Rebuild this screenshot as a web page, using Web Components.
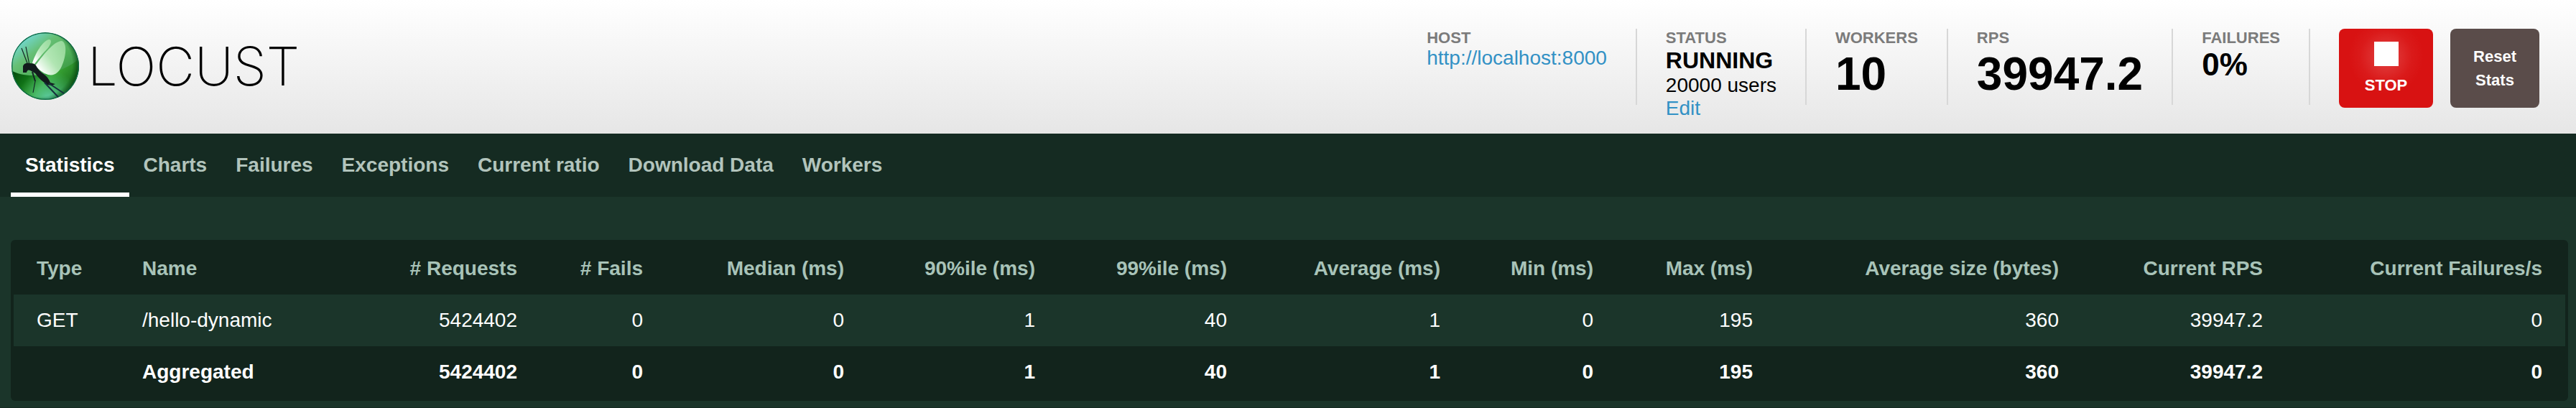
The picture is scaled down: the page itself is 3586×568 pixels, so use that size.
<!DOCTYPE html>
<html lang="en">
<head>
<meta charset="utf-8">
<title>Locust</title>
<style>
  html, body { margin: 0; }
  body { background: #1b352a; font-family: "Liberation Sans", Arial, sans-serif; font-size: 28px; color: #fff; }
</style>
</head>
<body>
<locust-app></locust-app>

<template id="t-app">
  <style>
    :host { display: block; }
    header { display: flex; align-items: flex-start; justify-content: space-between; height: 186px; box-sizing: border-box; padding: 40px 51px 0 16px; background: linear-gradient(#fff, #e6e6e6); color: #000; }
    .boxes { display: flex; align-items: flex-start; }
    .buttons { display: flex; gap: 24px; padding-left: 40px; }
    nav { display: flex; height: 88px; padding: 0 15px; background: #152b22; }
    main { display: block; padding: 60px 11px 9px 15px; }
    footer { height: 8px; background: #152b22; }
    a { color: #3291c5; text-decoration: none; }
    .running { font: bold 32px/38px "Liberation Sans", Arial, sans-serif; display: block; }
  </style>
  <header>
    <locust-logo></locust-logo>
    <div class="boxes">
      <stat-box label="Host"><a href="#host">http://localhost:8000</a></stat-box>
      <stat-box label="Status"><span class="running">RUNNING</span>20000 users<br><a href="#edit">Edit</a></stat-box>
      <stat-box label="Workers" size="large">10</stat-box>
      <stat-box label="RPS" size="large">39947.2</stat-box>
      <stat-box label="Failures" size="medium">0%</stat-box>
      <div class="buttons">
        <action-button kind="stop">STOP</action-button>
        <action-button kind="reset">Reset<br>Stats</action-button>
      </div>
    </div>
  </header>
  <nav>
    <nav-tab active>Statistics</nav-tab>
    <nav-tab>Charts</nav-tab>
    <nav-tab>Failures</nav-tab>
    <nav-tab>Exceptions</nav-tab>
    <nav-tab>Current ratio</nav-tab>
    <nav-tab>Download Data</nav-tab>
    <nav-tab>Workers</nav-tab>
  </nav>
  <main><stats-table></stats-table></main>
  <footer></footer>
</template>

<template id="t-logo">
  <style>
    :host { display: flex; align-items: center; gap: 12px; height: 104px; }
    svg { display: block; width: 94px; height: 94px; }
    span { font: 200 74px/94px Inter, sans-serif; color: #000; }
  </style>
  <svg viewBox="0 0 94 94" aria-hidden="true">
    <defs>
      <linearGradient id="base" x1="0.1" y1="0.1" x2="0.7" y2="0.9">
        <stop offset="0" stop-color="#74dbe0"/><stop offset="0.3" stop-color="#66bf74"/>
        <stop offset="0.6" stop-color="#4fae58"/><stop offset="1" stop-color="#2d8a38"/>
      </linearGradient>
      <linearGradient id="shade" x1="0" y1="0.3" x2="0.8" y2="0.7">
        <stop offset="0" stop-color="#02470a"/><stop offset="0.3" stop-color="#0f7016"/>
        <stop offset="0.65" stop-color="#3ba736"/><stop offset="1" stop-color="#1f7a22"/>
      </linearGradient>
      <radialGradient id="glow" cx="0.55" cy="1" r="0.45">
        <stop offset="0" stop-color="#66d6b4" stop-opacity="0.95"/><stop offset="1" stop-color="#4cc07a" stop-opacity="0"/>
      </radialGradient>
      <radialGradient id="rim" cx="0.42" cy="0.47" r="0.6">
        <stop offset="0.8" stop-color="#064d14" stop-opacity="0"/><stop offset="1" stop-color="#04330c" stop-opacity="0.85"/>
      </radialGradient>
      <linearGradient id="wing" x1="1" y1="0" x2="0.1" y2="0.8">
        <stop offset="0" stop-color="#b8ecb8" stop-opacity="0.6"/><stop offset="0.6" stop-color="#c9f3c9" stop-opacity="0.8"/><stop offset="1" stop-color="#fff"/>
      </linearGradient>
      <clipPath id="globe"><circle cx="47" cy="47" r="47"/></clipPath>
    </defs>
    <g clip-path="url(#globe)">
      <circle cx="47" cy="47" r="47" fill="url(#base)"/>
      <path d="M0 53C20 66 66 61 94 37V94H0Z" fill="url(#shade)"/>
      <circle cx="47" cy="47" r="47" fill="url(#glow)"/>
      <circle cx="47" cy="47" r="47" fill="url(#rim)"/>
      <circle cx="47" cy="47" r="46.300" fill="none" stroke="#0f6a48" stroke-width="1.400"/>
      <path d="M29 43C33 30 43 12 52 10C58 10 54 19 48 25C42 31 36 39 32 44Z" fill="url(#wing)"/>
      <path d="M35 44C44 32 59 12 70 12C78 15 76 34 70 47C66 56 60 61 51 59C44 57 38 52 33 46Z" fill="url(#wing)"/>
      <path d="M16 56V47Q18 42 25 43Q32 43 34 46Q37 53 46 59Q52 64 54 70L61 72L56 74L50 73Q39 66 33 57L26 53Q22 51 21 56Z" fill="#121b1c"/>
      <path d="M22 43L14 22M24.500 43L20 20M29 55L33 68L30 84" fill="none" stroke="#142727" stroke-width="1.200"/>
      <path d="M46 70L65 90M52 71L73 85" fill="none" stroke="#17313d" stroke-width="2"/>
      <path d="M29 55L33 68" stroke="#142727" stroke-width="2"/>
    </g>
  </svg>
  <span>LOCUST</span>
</template>

<template id="t-box">
  <style>
    :host { display: block; height: 106px; padding: 0 40px; border-right: 2px solid #d7d7d7; white-space: nowrap; line-height: 32px; }
    .label { font-size: 22px; line-height: 25px; font-weight: bold; color: #7b7b7b; text-transform: uppercase; }
    :host([size="large"]) .value { font-size: 64px; line-height: 76px; font-weight: bold; }
    :host([size="medium"]) .value { font-size: 44px; line-height: 50px; font-weight: bold; }
  </style>
  <div class="label"></div>
  <div class="value"><slot></slot></div>
</template>

<template id="t-button">
  <style>
    :host { display: block; }
    button { display: flex; flex-direction: column; align-items: center; justify-content: center; box-sizing: border-box; width: 124px; height: 110px; border: 0; border-radius: 8px; padding: 0; font: bold 22px/33px "Liberation Sans", Arial, sans-serif; color: #fff; background: #5a4c4a; text-align: center; }
    i { display: none; width: 34px; height: 34px; background: #fff; margin-bottom: 10px; }
    :host([kind="stop"]) button { width: 131px; padding-top: 3px; background: radial-gradient(circle at 50% 35%, #e24444, #da1a1a 36px, #d81212 52px); }
    :host([kind="stop"]) i { display: block; }
  </style>
  <button type="button"><i></i><span><slot></slot></span></button>
</template>

<template id="t-tab">
  <style>
    :host { display: block; }
    a { display: block; box-sizing: border-box; height: 88px; padding: 27px 20px 0; border-bottom: 6px solid transparent; font-weight: bold; line-height: 34px; color: #b2c4bc; text-decoration: none; }
    :host([active]) a { color: #fff; border-color: #fff; }
  </style>
  <a href="#tab"><slot></slot></a>
</template>

<template id="t-table">
  <style>
    :host { display: block; padding: 4px; border-radius: 6px; background: #12241c; }
    table { width: 100%; table-layout: fixed; border-collapse: collapse; }
    th, td { height: 72px; box-sizing: border-box; padding: 0 32px; text-align: right; white-space: nowrap; line-height: 32px; }
    th { color: #a8c3b8; }
    th:nth-child(-n+2), td:nth-child(-n+2) { text-align: left; }
    tbody tr { background: #1b352a; }
    tfoot td { font-weight: bold; }
  </style>
  <table><colgroup></colgroup><thead></thead><tbody></tbody><tfoot></tfoot></table>
</template>

<script>
  const define = (name, id, setup) => customElements.define(name, class extends HTMLElement {
    constructor() {
      super();
      this.attachShadow({ mode: "open" }).append(document.getElementById(id).content.cloneNode(true));
      if (setup) setup(this, this.shadowRoot);
    }
  });
  define("locust-logo", "t-logo");
  define("stat-box", "t-box", (el, root) => { root.querySelector(".label").textContent = el.getAttribute("label"); });
  define("action-button", "t-button");
  define("nav-tab", "t-tab");
  define("stats-table", "t-table", (el, root) => {
    const row = (tag, cells) => "<tr>" + cells.map(c => `<${tag}>${c}</${tag}>`).join("") + "</tr>";
    const nums = ["5424402", "0", "0", "1", "40", "1", "0", "195", "360", "39947.2", "0"];
    // Base column widths; the fixed table layout shares any spare width between them.
    const widths = [147, 324, 262, 175, 280, 266, 267, 297, 213, 222, 426, 284, 389];
    root.querySelector("colgroup").innerHTML = widths.map(w => `<col style="width:${w}px">`).join("");
    root.querySelector("thead").innerHTML = row("th", ["Type", "Name", "# Requests", "# Fails", "Median (ms)", "90%ile (ms)", "99%ile (ms)", "Average (ms)", "Min (ms)", "Max (ms)", "Average size (bytes)", "Current RPS", "Current Failures/s"]);
    root.querySelector("tbody").innerHTML = row("td", ["GET", "/hello-dynamic", ...nums]);
    root.querySelector("tfoot").innerHTML = row("td", ["", "Aggregated", ...nums]);
  });
  define("locust-app", "t-app");
</script>
</body>
</html>
